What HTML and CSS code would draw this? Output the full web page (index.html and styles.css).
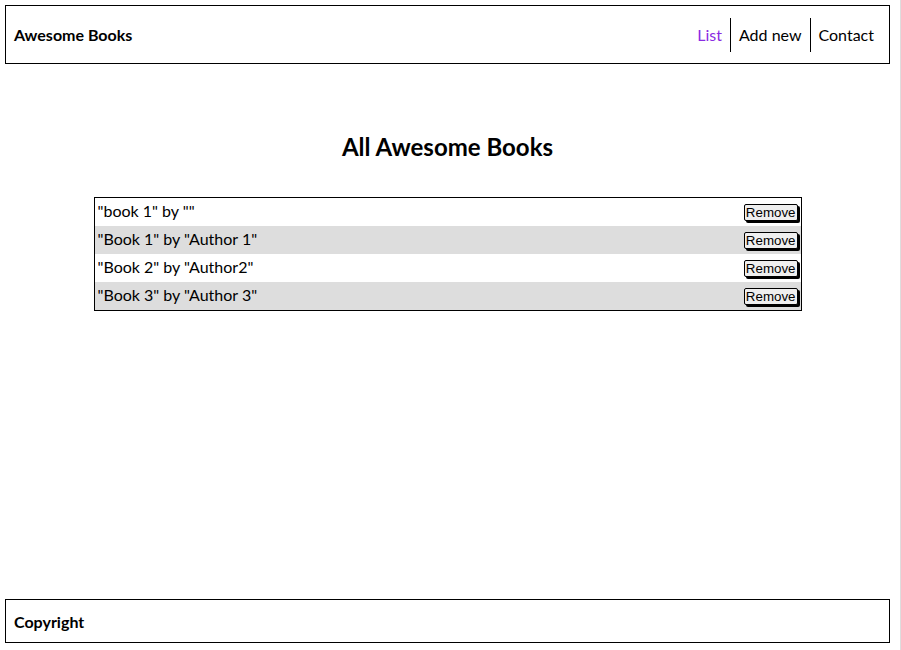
FILE: index.html
```html
<!DOCTYPE html>
<html lang="en">
<head>
<meta charset="utf-8">
<title>Awesome Books</title>
<link rel="stylesheet" href="styles.css">
</head>
<body>
<header class="site-header">
  <span class="brand">Awesome Books</span>
  <nav class="nav">
    <a class="nav-link active" href="#">List</a>
    <a class="nav-link" href="#">Add new</a>
    <a class="nav-link" href="#">Contact</a>
  </nav>
</header>
<main class="content">
  <h2 class="title">All Awesome Books</h2>
  <ul class="books">
    <li class="book"><span class="book-text">"book 1" by ""</span><button class="remove">Remove</button></li>
    <li class="book"><span class="book-text">"Book 1" by "Author 1"</span><button class="remove">Remove</button></li>
    <li class="book"><span class="book-text">"Book 2" by "Author2"</span><button class="remove">Remove</button></li>
    <li class="book"><span class="book-text">"Book 3" by "Author 3"</span><button class="remove">Remove</button></li>
  </ul>
</main>
<footer class="site-footer">
  <span class="brand">Copyright</span>
</footer>
</body>
</html>
```
FILE: styles.css
```css
html {
  background: #fff;
  border-right: 1px solid #ddd;
}
body {
  margin: 5px 10px 7px 5px;
  min-height: 638px;
  display: flex;
  flex-direction: column;
  font-family: Lato, "Liberation Sans", sans-serif;
  color: #000;
}
.site-header {
  height: 57px;
  border: 1px solid #000;
  display: flex;
  align-items: center;
  justify-content: space-between;
  padding: 0 7px 0 8px;
}
.brand {
  font-weight: 700;
  font-size: 16px;
}
.nav {
  display: flex;
  align-items: center;
}
.nav-link {
  display: block;
  height: 34px;
  line-height: 34px;
  padding: 0 8px;
  font-size: 16px;
  color: #000;
  text-decoration: none;
}
.nav-link + .nav-link {
  border-left: 1px solid #000;
}
.nav-link.active {
  color: #8a2be2;
}
.content {
  flex: 1;
}
.title {
  text-align: center;
  font-size: 24px;
  font-weight: 700;
  margin: 68px 0 36px;
}
.books {
  list-style: none;
  margin: 0 auto;
  padding: 0;
  width: 80%;
  box-sizing: border-box;
  border: 1px solid #000;
}
.book {
  height: 28px;
  display: flex;
  align-items: flex-start;
  justify-content: space-between;
  padding: 0 3px;
  font-size: 16px;
}
.book-text {
  line-height: 19px;
  padding-top: 3px;
}
.book:nth-child(even) {
  background: #ddd;
}
.remove {
  font-family: "Liberation Sans", Arial, sans-serif;
  font-size: 13.33px;
  line-height: 15px;
  padding: 0 1px;
  margin-top: 6px;
  border: 1px solid #000;
  border-radius: 2px;
  background: #efefef;
  box-shadow: 2px 2px 0 #000;
  color: #000;
}
.site-footer {
  height: 42px;
  border: 1px solid #000;
  display: flex;
  align-items: center;
  padding: 0 8px;
}
```
